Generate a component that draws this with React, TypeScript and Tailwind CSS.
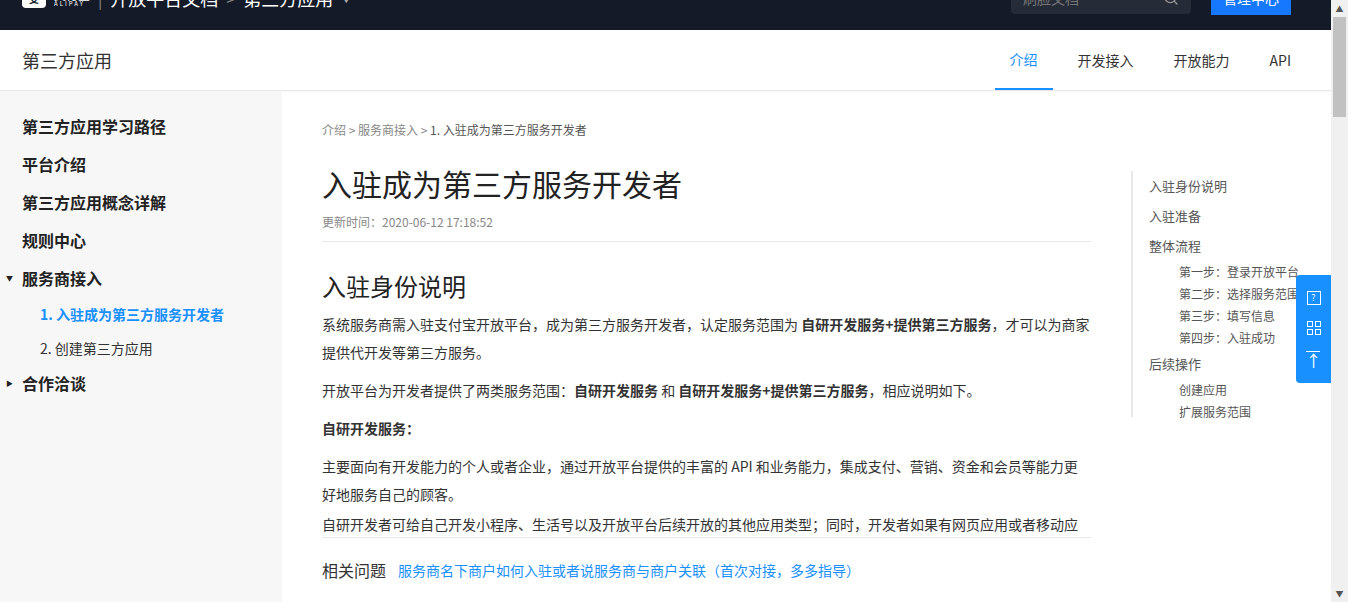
import { Search } from 'lucide-react'

const f = { fontFamily: '"Noto Sans CJK SC", "Liberation Sans", sans-serif' }

const toc = [
  { t: '入驻身份说明', s: false },
  { t: '入驻准备', s: false },
  { t: '整体流程', s: false },
  { t: '第一步：登录开放平台', s: true },
  { t: '第二步：选择服务范围', s: true },
  { t: '第三步：填写信息', s: true },
  { t: '第四步：入驻成功', s: true },
  { t: '后续操作', s: false },
  { t: '创建应用', s: true },
  { t: '扩展服务范围', s: true },
]

export default function App() {
  return (
    <div style={f} className="flex h-[602px] w-[1348px] overflow-hidden bg-white">
      <div className="flex w-[1331px] flex-col">
        {/* top bar, scrolled partly out of view */}
        <div className="h-[30px] shrink-0 overflow-hidden bg-[#141a28]">
          <div className="-mt-[34px] flex h-[64px] items-center px-[22px]">
            <div className="flex items-center gap-2 text-white">
              <div className="flex h-[20px] w-[24px] items-center justify-center rounded bg-white text-[10px] font-bold text-[#141a28]">支</div>
              <div className="flex flex-col leading-none">
                <span className="text-[12px]">支付宝</span>
                <span className="text-[6px] tracking-[2px]">ALIPAY</span>
              </div>
              <span className="text-[#888]">|</span>
              <span className="text-[18px]">开放平台文档</span>
              <span className="text-[#888]">&gt;</span>
              <span className="text-[18px]">第三方应用</span>
              <span className="text-[10px] text-[#aaa]">▼</span>
            </div>
            <div className="ml-auto flex items-center gap-[20px]">
              <div className="flex h-[32px] w-[180px] items-center justify-between rounded bg-[#262b38] px-3 text-[14px] text-[#777]">
                <span>刷脸文档</span>
                <Search size={16} className="text-[#999]" />
              </div>
              <div className="flex h-[34px] w-[80px] items-center justify-center bg-[#1677ff] text-[14px] text-white">管理中心</div>
            </div>
            <div className="w-[18px]" />
          </div>
        </div>
        {/* second header */}
        <div className="flex h-[61px] shrink-0 items-stretch border-b border-[#e8e8e8] bg-white px-[22px] shadow-[0_1px_2px_rgba(0,0,0,0.04)]">
          <div className="flex items-center text-[18px] text-[#333]">第三方应用</div>
          <div className="ml-auto flex items-stretch text-[14px] text-[#333]">
            <div className="flex w-[58px] items-center justify-center border-b-2 border-[#1890ff] text-[#1890ff]">介绍</div>
            <div className="flex items-center pl-[25px]">开发接入</div>
            <div className="flex items-center pl-[40px]">开放能力</div>
            <div className="flex items-center pl-[40px] pr-[18px]">API</div>
          </div>
        </div>
        <div className="flex min-h-0 flex-1">
          {/* sidebar */}
          <div className="w-[282px] shrink-0 bg-[#f7f7f7] pt-[16px] text-[#222]">
            {['第三方应用学习路径', '平台介绍', '第三方应用概念详解', '规则中心'].map((t) => (
              <div key={t} className="flex h-[38px] items-center pl-[22px] text-[16px] font-bold">{t}</div>
            ))}
            <div className="relative flex h-[38px] items-center pl-[22px] text-[16px] font-bold">
              <span className="absolute left-[6px] text-[7px]">▼</span>服务商接入
            </div>
            <div className="flex h-[34px] items-center pl-[40px] text-[14px] font-bold text-[#1890ff]">1. 入驻成为第三方服务开发者</div>
            <div className="flex h-[34px] items-center pl-[40px] text-[14px] text-[#333]">2. 创建第三方应用</div>
            <div className="relative flex h-[36px] items-center pl-[22px] text-[16px] font-bold">
              <span className="absolute left-[6px] text-[7px]">▶</span>合作洽谈
            </div>
          </div>
          {/* main */}
          <div className="relative flex flex-1">
            <div className="w-[809px] shrink-0 pl-[40px] pt-[30px]">
              <div className="text-[12px] text-[#888]">介绍 &gt; 服务商接入 &gt; <span className="text-[#555]">1. 入驻成为第三方服务开发者</span></div>
              <h1 className="mt-[24px] text-[30px] leading-[40px] text-[#222]">入驻成为第三方服务开发者</h1>
              <div className="mt-[10px] border-b border-[#e8e8e8] pb-[10px] text-[12px] text-[#888]">更新时间：2020-06-12 17:18:52</div>
              <h2 className="mt-[26px] text-[24px] leading-[36px] text-[#222]">入驻身份说明</h2>
              <div className="text-[14px] leading-[28px] text-[#333]">
                <p className="mt-[6px]">系统服务商需入驻支付宝开放平台，成为第三方服务开发者，认定服务范围为 <b>自研开发服务+提供第三方服务</b>，才可以为商家提供代开发等第三方服务。</p>
                <p className="mt-[10px]">开放平台为开发者提供了两类服务范围：<b>自研开发服务</b> 和 <b>自研开发服务+提供第三方服务</b>，相应说明如下。</p>
                <p className="mt-[10px] font-bold">自研开发服务：</p>
                <p className="mt-[10px]">主要面向有开发能力的个人或者企业，通过开放平台提供的丰富的 API 和业务能力，集成支付、营销、资金和会员等能力更好地服务自己的顾客。</p>
                <p className="mt-[2px] h-[28px] overflow-hidden border-b border-[#e8e8e8]">自研开发者可给自己开发小程序、生活号以及开放平台后续开放的其他应用类型；同时，开发者如果有网页应用或者移动应用</p>
              </div>
              <div className="mt-[20px] flex items-center gap-3">
                <span className="text-[16px] text-[#333]">相关问题</span>
                <span className="text-[14px] text-[#1890ff]">服务商名下商户如何入驻或者说服务商与商户关联（首次对接，多多指导）</span>
              </div>
            </div>
            <div className="ml-[40px] mt-[80px] h-[246px] border-l-2 border-[#e8e8e8] pl-[16px] text-[13px] text-[#555]">
              {toc.map((x) => (
                <div key={x.t} className={x.s ? 'h-[22px] whitespace-nowrap pl-[30px] text-[12px] leading-[22px]' : 'h-[30px] leading-[30px]'}>{x.t}</div>
              ))}
            </div>
            <div className="absolute right-0 top-[184px] flex w-[35px] flex-col items-center rounded-l bg-[#1890ff] py-[10px] text-white">
              <div className="flex h-[25px] items-center justify-center"><span className="flex h-[14px] w-[14px] items-center justify-center border border-white text-[9px]">?</span></div>
              <div className="flex h-[35px] items-center justify-center">
                <div className="grid grid-cols-2 gap-[2px]">
                  {[0, 1, 2, 3].map((i) => <div key={i} className="h-[6px] w-[6px] border border-white" />)}
                </div>
              </div>
              <div className="flex h-[28px] flex-col items-center justify-center text-[16px] leading-none">
                <div className="h-[1px] w-[14px] bg-white" />
                <span>↑</span>
              </div>
            </div>
          </div>
        </div>
      </div>
      {/* scrollbar */}
      <div className="flex w-[17px] flex-col bg-[#f0f0f0]">
        <div className="flex h-[17px] items-center justify-center text-[8px] text-[#555]">▲</div>
        <div className="mx-[2px] h-[100px] bg-[#c1c1c1]" />
        <div className="mt-auto flex h-[17px] items-center justify-center text-[8px] text-[#555]">▼</div>
      </div>
    </div>
  )
}
